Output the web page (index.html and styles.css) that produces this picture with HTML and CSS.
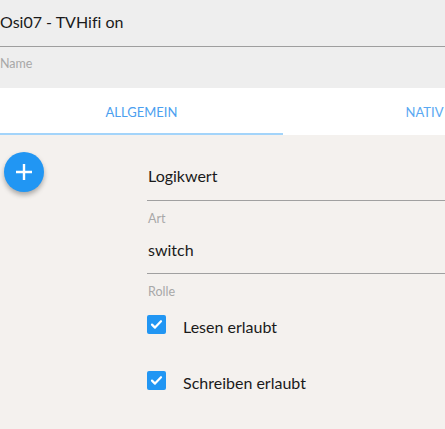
FILE: index.html
```html
<!DOCTYPE html>
<html lang="de">
<head>
<meta charset="utf-8">
<link rel="stylesheet" href="styles.css">
</head>
<body>
<div class="page">
  <header class="header">
    <div class="title-field">Osi07 - TVHifi on</div>
    <div class="header-label">Name</div>
  </header>
  <nav class="tabs">
    <div class="tab active">ALLGEMEIN</div>
    <div class="tab">NATIV</div>
  </nav>
  <main class="content">
    <div class="fab-col">
      <button class="fab" aria-label="Hinzufügen">
        <svg width="20" height="20" viewBox="0 0 20 20"><path d="M10 2v16M2 10h16" stroke="#fff" stroke-width="2.4" fill="none"/></svg>
      </button>
    </div>
    <form class="form">
      <div class="field first">
        <div class="field-input">Logikwert</div>
      </div>
      <div class="field">
        <div class="field-label">Art</div>
        <div class="field-input">switch</div>
      </div>
      <div class="field-label role">Rolle</div>
      <div class="check-row">
        <span class="checkbox"><svg width="19" height="19" viewBox="0 0 19 19"><path d="M5 9.6l3 3 6-6.4" stroke="#fff" stroke-width="2.2" fill="none" stroke-linecap="round" stroke-linejoin="round"/></svg></span>
        <span class="check-text">Lesen erlaubt</span>
      </div>
      <div class="check-row">
        <span class="checkbox"><svg width="19" height="19" viewBox="0 0 19 19"><path d="M5 9.6l3 3 6-6.4" stroke="#fff" stroke-width="2.2" fill="none" stroke-linecap="round" stroke-linejoin="round"/></svg></span>
        <span class="check-text">Schreiben erlaubt</span>
      </div>
    </form>
  </main>
</div>
</body>
</html>
```
FILE: styles.css
```css
* { box-sizing: border-box; }
html, body { margin: 0; padding: 0; }
body {
  font-family: Lato, "Open Sans", sans-serif;
  font-variant-ligatures: none;
  color: #1a1a1a;
  background: #f4f1ee;
  width: 445px;
  height: 429px;
  overflow: hidden;
}
.page { width: 445px; height: 429px; overflow: hidden; display: flex; flex-direction: column; }
.header {
  background: #eeeeee;
  height: 88px;
}
.title-field {
  font-size: 16px;
  line-height: 24px;
  padding-top: 10px;
  padding-bottom: 12px;
  border-bottom: 1px solid #9e9e9e;
}
.header-label {
  font-size: 12.5px;
  line-height: 16px;
  margin-top: 9px;
  color: #a8a8a8;
}
.tabs {
  background: #fff;
  height: 47px;
  display: flex;
  width: 566px;
}
.tab {
  width: 283px;
  flex: none;
  text-align: center;
  font-size: 13px;
  line-height: 20px;
  padding-top: 14px;
  color: #5aa9f2;
  border-bottom: 2px solid transparent;
}
.tab.active {
  border-bottom-color: #a3d4fa;
  color: #4b9ff0;
}
.content {
  flex: 1;
  display: flex;
  background: #f4f1ee;
}
.fab-col { width: 147px; flex: none; padding: 17px 0 0 4px; }
.fab {
  width: 40px;
  height: 40px;
  border-radius: 50%;
  border: none;
  padding: 0;
  background: #2196f3;
  display: flex;
  align-items: center;
  justify-content: center;
  box-shadow: 0 3px 5px rgba(0,0,0,0.3);
}
.form { flex: 1; padding-top: 29px; }
.field-input {
  font-size: 16px;
  line-height: 24px;
  padding-bottom: 11px;
  border-bottom: 1px solid #a0a0a0;
  padding-left: 1px;
}
.field.first .field-input { padding-bottom: 12px; }
.field-label {
  font-size: 12.5px;
  line-height: 16px;
  color: #a8a8a8;
  margin-top: 10px;
  margin-bottom: 11px;
  padding-left: 1px;
}
.field-label.role { margin-bottom: 15px; }
.check-row {
  display: flex;
  align-items: flex-start;
  height: 24px;
  margin-bottom: 32px;
}
.checkbox {
  width: 19px;
  height: 19px;
  background: #2196f3;
  border-radius: 2px;
  display: flex;
}
.check-text {
  margin-left: 17px;
  font-size: 16px;
  line-height: 24px;
}
```
